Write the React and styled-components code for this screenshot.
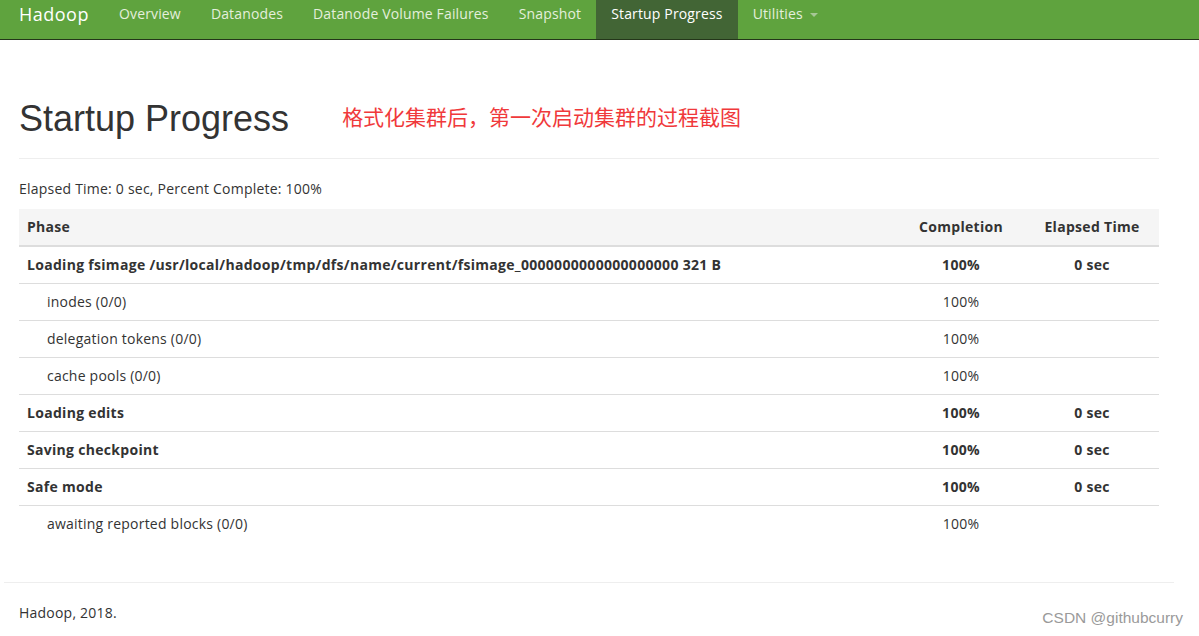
import React from "react";
import styled, { createGlobalStyle } from "styled-components";

const Global = createGlobalStyle`
  html, body { margin: 0; padding: 0; background: #fff; }
  body {
    font-family: "Open Sans", "Noto Sans", "Liberation Sans", sans-serif;
    font-size: 14px;
    letter-spacing: 0.22px;
    color: #333;
  }
  * { box-sizing: border-box; }
`;

const Navbar = styled.nav`
  height: 40px;
  background: #5fa33e;
  border-bottom: 1px solid #24361a;
  display: flex;
  align-items: stretch;
  padding-left: 19px;
`;

const Brand = styled.a`
  display: flex;
  align-items: center;
  font-family: "Open Sans", "Noto Sans", sans-serif;
  font-size: 18px;
  letter-spacing: 0.5px;
  color: #fff;
  margin-right: 15px;
  padding-bottom: 12px;
  text-decoration: none;
`;

const NavItem = styled.a`
  display: flex;
  align-items: center;
  padding: 0 15px 12px;
  color: ${(p) => (p.$active ? "#fff" : "#e4efdc")};
  background: ${(p) => (p.$active ? "#426535" : "transparent")};
  font-size: 14px;
  letter-spacing: 0.15px;
  text-decoration: none;
  white-space: nowrap;
`;

const Caret = styled.span`
  display: inline-block;
  width: 0;
  height: 0;
  margin-left: 7px;
  margin-top: 2px;
  border-top: 4px solid #a6c796;
  border-left: 4px solid transparent;
  border-right: 4px solid transparent;
`;

const Container = styled.div`
  width: 1170px;
  margin-left: 4px;
  padding: 0 15px;
`;

const PageHeader = styled.div`
  display: flex;
  align-items: center;
  margin-top: 57px;
  padding-bottom: 17px;
  border-bottom: 1px solid #eee;
`;

const Title = styled.h1`
  margin: 0;
  font-family: "Liberation Sans", Arial, sans-serif;
  font-size: 36px;
  font-weight: 400;
  letter-spacing: 0;
  color: #333;
  line-height: 44px;
`;

const Note = styled.span`
  margin-left: 53px;
  margin-top: -6px;
  color: #f0393b;
  font-family: "Noto Sans CJK SC", sans-serif;
  font-size: 21px;
  letter-spacing: 0;
`;

const Summary = styled.p`
  margin: 20px 0 10px;
  line-height: 20px;
`;

const Table = styled.table`
  width: 100%;
  border-collapse: collapse;
`;

const Th = styled.th`
  background: #f5f5f5;
  height: 37px;
  padding: 0 8px 2px;
  text-align: ${(p) => p.$align || "left"};
  width: ${(p) => p.$w || "auto"};
  font-weight: 700;
  letter-spacing: 0.3px;
  border-bottom: 2px solid #ddd;
`;

const Td = styled.td`
  height: 37px;
  padding: 0 8px 0 ${(p) => (p.$indent ? "28px" : "8px")};
  text-align: ${(p) => p.$align || "left"};
  font-weight: ${(p) => (p.$bold ? 700 : 400)};
  letter-spacing: ${(p) => (p.$bold ? "0.3px" : "0.22px")};
  border-top: ${(p) => (p.$first ? "none" : "1px solid #ddd")};
  white-space: nowrap;
`;

const Footer = styled.div`
  width: 1170px;
  margin-left: 4px;
  margin-top: 40px;
  border-top: 1px solid #eee;
  padding: 20px 15px 0;
  line-height: 20px;
`;

const Watermark = styled.span`
  position: absolute;
  right: 16px;
  bottom: 9px;
  font-family: "Liberation Sans", Arial, sans-serif;
  font-size: 15.5px;
  letter-spacing: 0;
  color: #9a9a9a;
`;

const rows = [
  { phase: "Loading fsimage /usr/local/hadoop/tmp/dfs/name/current/fsimage_0000000000000000000 321 B", bold: true, time: "0 sec" },
  { phase: "inodes (0/0)" },
  { phase: "delegation tokens (0/0)" },
  { phase: "cache pools (0/0)" },
  { phase: "Loading edits", bold: true, time: "0 sec" },
  { phase: "Saving checkpoint", bold: true, time: "0 sec" },
  { phase: "Safe mode", bold: true, time: "0 sec" },
  { phase: "awaiting reported blocks (0/0)" },
];

export default function App() {
  return (
    <>
      <Global />
      <Navbar>
        <Brand>Hadoop</Brand>
        <NavItem>Overview</NavItem>
        <NavItem>Datanodes</NavItem>
        <NavItem>Datanode Volume Failures</NavItem>
        <NavItem>Snapshot</NavItem>
        <NavItem $active>Startup Progress</NavItem>
        <NavItem>
          Utilities<Caret />
        </NavItem>
      </Navbar>
      <Container>
        <PageHeader>
          <Title>Startup Progress</Title>
          <Note>格式化集群后，第一次启动集群的过程截图</Note>
        </PageHeader>
        <Summary>Elapsed Time: 0 sec, Percent Complete: 100%</Summary>
        <Table>
          <thead>
            <tr>
              <Th>Phase</Th>
              <Th $align="center" $w="128px">Completion</Th>
              <Th $align="center" $w="134px">Elapsed Time</Th>
            </tr>
          </thead>
          <tbody>
            {rows.map((r, i) => (
              <tr key={i}>
                <Td $first={i === 0} $bold={r.bold} $indent={!r.bold}>{r.phase}</Td>
                <Td $first={i === 0} $bold={r.bold} $align="center">100%</Td>
                <Td $first={i === 0} $bold={r.bold} $align="center">{r.time || ""}</Td>
              </tr>
            ))}
          </tbody>
        </Table>
      </Container>
      <Footer>Hadoop, 2018.</Footer>
      <Watermark>CSDN @githubcurry</Watermark>
    </>
  );
}
